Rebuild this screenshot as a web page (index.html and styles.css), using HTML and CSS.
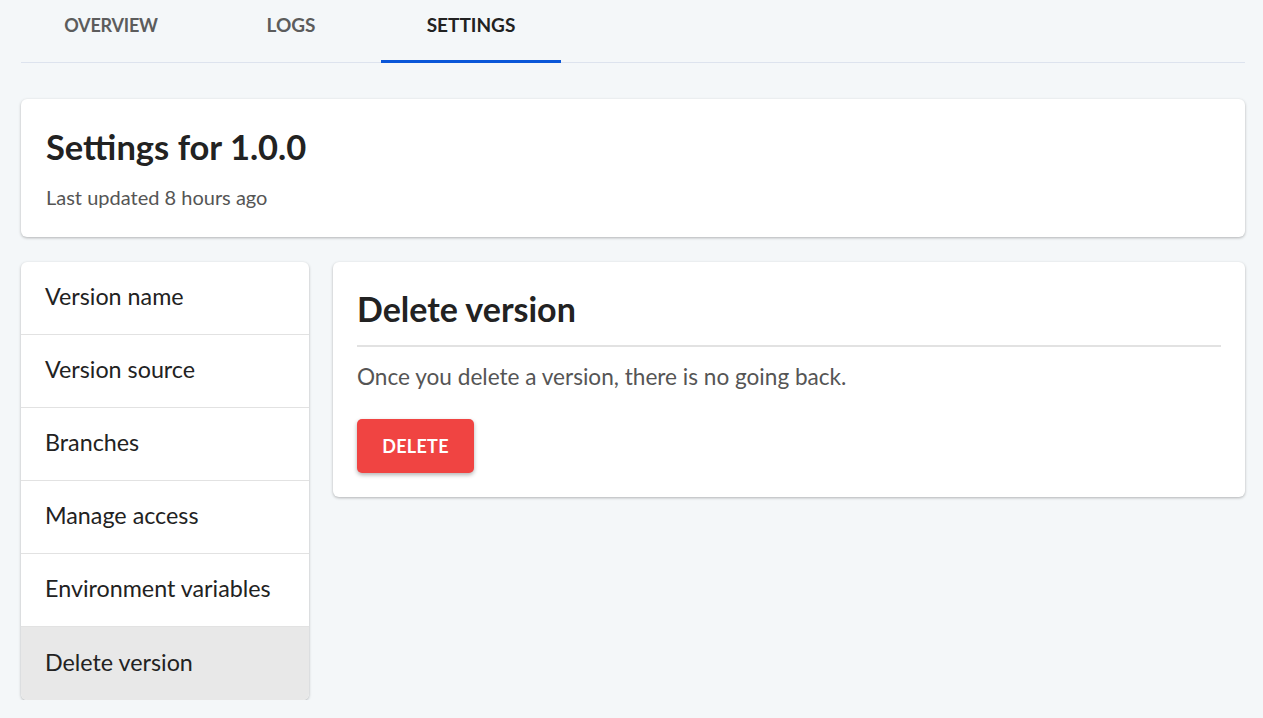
FILE: index.html
```html
<!DOCTYPE html>
<html lang="en">
<head>
<meta charset="utf-8">
<title>Settings for 1.0.0</title>
<link rel="stylesheet" href="styles.css">
</head>
<body>
<div class="page">
  <nav class="tabs">
    <a class="tab">OVERVIEW</a>
    <a class="tab">LOGS</a>
    <a class="tab active">SETTINGS</a>
  </nav>

  <section class="card header-card">
    <h1 class="title">Settings for 1.0.0</h1>
    <p class="subtitle">Last updated 8 hours ago</p>
  </section>

  <div class="layout">
    <ul class="card sidebar">
      <li class="side-item">Version name</li>
      <li class="side-item">Version source</li>
      <li class="side-item">Branches</li>
      <li class="side-item">Manage access</li>
      <li class="side-item">Environment variables</li>
      <li class="side-item selected">Delete version</li>
    </ul>

    <section class="card panel">
      <h2 class="panel-title">Delete version</h2>
      <p class="panel-text">Once you delete a version, there is no going back.</p>
      <button class="btn-danger">DELETE</button>
    </section>
  </div>
</div>
</body>
</html>
```

FILE: styles.css
```css
* { box-sizing: border-box; }

html, body {
  margin: 0;
  padding: 0;
  background: #f4f7f9;
  font-family: Lato, "Noto Sans", sans-serif;
  color: #222;
}

.page {
  padding: 0 18px 0 21px;
}

.tabs {
  display: flex;
  height: 63px;
  border-bottom: 1px solid #dde3ee;
}

.tab {
  width: 180px;
  display: flex;
  justify-content: center;
  padding-top: 13px;
  font-size: 19px;
  font-weight: 700;
  color: #5c5c5c;
  border-bottom: 3px solid transparent;
  margin-bottom: -1px;
}

.tab:first-child {
  font-size: 18px;
  padding-top: 14px;
  letter-spacing: -0.2px;
}

.tab.active {
  color: #222;
  border-bottom-color: #0a56d8;
}

.card {
  background: #fff;
  border-radius: 6px;
  box-shadow: 0 1px 3px rgba(0, 0, 0, 0.28);
}

.header-card {
  margin-top: 36px;
  height: 138px;
  padding: 28px 25px 0;
}

.title {
  margin: 0;
  font-size: 34.5px;
  font-weight: 700;
  line-height: 40px;
  color: #222;
}

.subtitle {
  margin: 18px 0 0;
  font-size: 20px;
  line-height: 24px;
  color: #555;
}

.layout {
  display: flex;
  gap: 24px;
  margin-top: 25px;
  align-items: flex-start;
}

.sidebar {
  list-style: none;
  margin: 0;
  padding: 0;
  width: 288px;
  flex: none;
  overflow: hidden;
}

.side-item {
  height: 73px;
  display: flex;
  align-items: center;
  padding: 0 24px 5px;
  font-size: 23.3px;
  color: #222;
  border-top: 1px solid #e2e2e2;
}

.side-item:first-child {
  border-top: none;
  height: 72px;
}

.side-item.selected {
  background: #e8e8e8;
  height: 74px;
  padding-bottom: 3px;
}

.panel {
  flex: 1;
  height: 235px;
  padding: 27px 24px 0;
}

.panel-title {
  margin: 0;
  font-size: 34px;
  font-weight: 700;
  line-height: 40px;
  padding-bottom: 16px;
  border-bottom: 2px solid #e2e2e2;
}

.panel-text {
  margin: 16px 0 0;
  font-size: 22.6px;
  line-height: 28px;
  color: #555;
}

.btn-danger {
  margin-top: 28px;
  width: 117px;
  height: 54px;
  border: none;
  border-radius: 5px;
  background: #f04442;
  color: #fff;
  font-family: inherit;
  font-size: 18px;
  font-weight: 700;
  letter-spacing: 0.3px;
  box-shadow: 0 2px 4px rgba(0, 0, 0, 0.3);
}
```
